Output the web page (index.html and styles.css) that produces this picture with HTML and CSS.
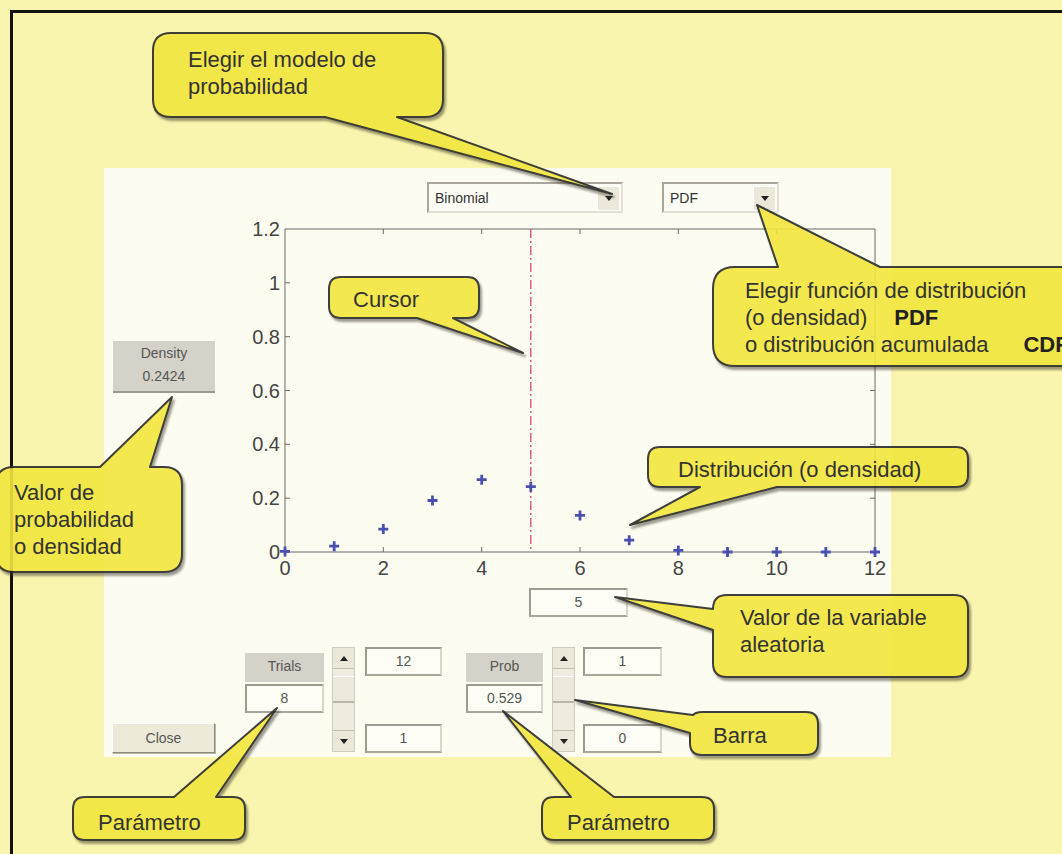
FILE: index.html
```html
<!DOCTYPE html>
<html lang="es">
<head>
    <meta charset="UTF-8">
    <meta name="viewport" content="width=device-width, initial-scale=1.0">
    <title>Distribuciones de probabilidad</title>
    <link rel="stylesheet" href="styles.css">
</head>
<body>
<div class="frame">
    <div class="fig">
        <div class="menus">
            <div class="popup wide">Binomial<span class="drop"></span></div>
            <div class="popup narrow">PDF<span class="drop"></span></div>
        </div>

        <div class="middle">
            <div class="side">
                <div class="readout">Density<br>0.2424</div>
            </div>
            <svg class="plot" width="657" height="365" viewBox="0 0 657 365">
                <rect x="51" y="11" width="590" height="323" fill="none" stroke="#6b6b6b" stroke-width="1"/>
                <path d="M149.3 334v-5M247.7 334v-5M346 334v-5M444.3 334v-5M542.7 334v-5
                         M149.3 11v5M247.7 11v5M346 11v5M444.3 11v5M542.7 11v5
                         M51 280.2h5M51 226.3h5M51 172.5h5M51 118.7h5M51 64.8h5
                         M641 280.2h-5M641 226.3h-5M641 172.5h-5M641 118.7h-5M641 64.8h-5"
                      stroke="#6b6b6b" stroke-width="1" fill="none"/>
                <g class="ticklabels" text-anchor="middle">
                    <text x="51" y="357">0</text>
                    <text x="149.3" y="357">2</text>
                    <text x="247.7" y="357">4</text>
                    <text x="346" y="357">6</text>
                    <text x="444.3" y="357">8</text>
                    <text x="542.7" y="357">10</text>
                    <text x="641" y="357">12</text>
                </g>
                <g class="ticklabels" text-anchor="end">
                    <text x="46" y="341">0</text>
                    <text x="46" y="287">0.2</text>
                    <text x="46" y="233">0.4</text>
                    <text x="46" y="179.5">0.6</text>
                    <text x="46" y="125.5">0.8</text>
                    <text x="46" y="72">1</text>
                    <text x="46" y="18">1.2</text>
                </g>
                <!-- cursor -->
                <path d="M296.8 11V334" stroke="#d9476d" stroke-width="1.3" stroke-dasharray="9 3 2 3"/>
                <!-- pdf values, binomial n=8 p=0.529 -->
                <path d="M46 333.4h10M51 328.4v10
                         M95.2 328.2h10M100.2 323.2v10
                         M144.3 311.1h10M149.3 306.1v10
                         M193.5 282.5h10M198.5 277.5v10
                         M242.7 261.7h10M247.7 256.7v10
                         M291.8 268.7h10M296.8 263.7v10
                         M341 297.4h10M346 292.4v10
                         M390.2 322.2h10M395.2 317.2v10
                         M439.3 332.4h10M444.3 327.4v10
                         M488.5 334h10M493.5 329v10
                         M537.7 334h10M542.7 329v10
                         M586.8 334h10M591.8 329v10
                         M636 334h10M641 329v10"
                      stroke="#4b50b0" stroke-width="2.8" fill="none"/>
            </svg>
        </div>

        <div class="edit xval">5</div>

        <div class="controls">
            <div class="btn">Close</div>

            <div class="param first">
                <div class="lbl">Trials</div>
                <div class="edit">8</div>
            </div>
            <div class="slider">
                <span class="arrow up"></span>
                <span class="track"><span class="thumb"></span></span>
                <span class="arrow down"></span>
            </div>
            <div class="limits">
                <div class="edit">12</div>
                <div class="edit">1</div>
            </div>

            <div class="param second">
                <div class="lbl">Prob</div>
                <div class="edit">0.529</div>
            </div>
            <div class="slider s2">
                <span class="arrow up"></span>
                <span class="track"><span class="thumb"></span></span>
                <span class="arrow down"></span>
            </div>
            <div class="limits l2">
                <div class="edit">1</div>
                <div class="edit">0</div>
            </div>
        </div>
    </div>
</div>

<!-- callouts -->
<svg class="notes" width="1062" height="854" viewBox="0 0 1062 854">
    <defs>
        <filter id="sh" x="-20%" y="-20%" width="140%" height="150%">
            <feDropShadow dx="2" dy="3" stdDeviation="1.2" flood-color="#3a382a" flood-opacity="0.55"/>
        </filter>
    </defs>
    <g class="bubble" filter="url(#sh)">
        <path d="M171,33 H425 Q443,33 443,51 V99 Q443,117 425,117 H397 L612,194 L325,117 H171 Q153,117 153,99 V51 Q153,33 171,33 Z"/>
        <path d="M341,277 H467 Q479,277 479,289 V306 Q479,318 467,318 H453 L523,353 L417,318 H341 Q329,318 329,306 V289 Q329,277 341,277 Z"/>
        <path d="M735,267 H778 L757,205 L880,267 H1070 Q1090,267 1090,287 V346 Q1090,366 1070,366 H735 Q713,366 713,344 V289 Q713,267 735,267 Z"/>
        <path d="M14,467 H100 L172,397 L150,467 H164 Q182,467 182,485 V554 Q182,572 164,572 H14 Q-4,572 -4,554 V485 Q-4,467 14,467 Z"/>
        <path d="M660,447 H956 Q968,447 968,459 V475 Q968,487 956,487 H777 L630,525 L700,487 H660 Q648,487 648,475 V459 Q648,447 660,447 Z"/>
        <path d="M727,595 H954 Q968,595 968,609 V663 Q968,677 954,677 H727 Q713,677 713,663 V630 L615,597 L713,609 Q713,595 727,595 Z"/>
        <path d="M702,712 H806 Q818,712 818,724 V743 Q818,755 806,755 H702 Q690,755 690,743 V733 L575,700 L693,715 Q696,712 702,712 Z"/>
        <path d="M85,797 H174 L277,708 L216,797 H233 Q245,797 245,809 V828 Q245,840 233,840 H85 Q73,840 73,828 V809 Q73,797 85,797 Z"/>
        <path d="M554,797 H571 L503,711 L614,797 H702 Q714,797 714,809 V828 Q714,840 702,840 H554 Q542,840 542,828 V809 Q542,797 554,797 Z"/>
    </g>
</svg>

<div class="note n-model">Elegir el modelo de<br>probabilidad</div>
<div class="note n-cursor">Cursor</div>
<div class="note n-func">Elegir función de distribución<br>(o densidad)<b class="k1">PDF</b><br>o distribución acumulada<b class="k2">CDF</b></div>
<div class="note n-value">Valor de<br>probabilidad<br>o densidad</div>
<div class="note n-dist">Distribución (o densidad)</div>
<div class="note n-var">Valor de la variable<br>aleatoria</div>
<div class="note n-bar">Barra</div>
<div class="note n-p1">Parámetro</div>
<div class="note n-p2">Parámetro</div>
</body>
</html>
```

FILE: styles.css
```css
body {
    margin: 0;
    padding: 10px 0 0 10px;
    width: 1062px;
    height: 854px;
    box-sizing: border-box;
    overflow: hidden;
    position: relative;
    background-color: #faf5ae;
    font-family: "Liberation Sans", Arial, sans-serif;
}

.frame {
    height: 844px;
    border-top: 3px solid #111;
    border-left: 3px solid #111;
    padding: 155px 0 0 91px;
    box-sizing: border-box;
}

.fig {
    width: 787px;
    height: 589px;
    padding-top: 14px;
    box-sizing: border-box;
    background-color: #fdfcf1;
    color: #444;
    font-size: 14px;
}

/* popup menus */
.menus {
    display: flex;
    gap: 39px;
    padding-left: 323px;
}

.popup {
    display: flex;
    align-items: center;
    height: 31px;
    box-sizing: border-box;
    padding: 0 2px 0 6px;
    background-color: #fdfcf4;
    border: 2px solid;
    border-color: #aaa79a #e4e1d4 #e4e1d4 #aaa79a;
    color: #333;
}

.popup.wide { width: 196px; }
.popup.narrow { width: 117px; }

.drop {
    margin-left: auto;
    width: 21px;
    height: 23px;
    display: flex;
    align-items: center;
    justify-content: center;
    background-color: #ebe8da;
    border-left: 1px solid #fff;
    border-top: 1px solid #fff;
}

.drop::after {
    content: "";
    border-left: 4px solid transparent;
    border-right: 4px solid transparent;
    border-top: 5px solid #222;
}

/* plot area */
.middle {
    display: flex;
    height: 365px;
    margin-top: 5px;
}

.side {
    width: 130px;
}

.readout {
    margin: 123px 0 0 9px;
    width: 102px;
    height: 52px;
    box-sizing: border-box;
    padding-top: 1px;
    background-color: #d5d2c9;
    border-bottom: 2px solid #9c998e;
    text-align: center;
    line-height: 23px;
    color: #555;
}

.plot {
    display: block;
}

.ticklabels {
    font-family: "Liberation Sans", Arial, sans-serif;
    font-size: 20px;
    fill: #454545;
}

/* uicontrols */
.edit {
    height: 29px;
    box-sizing: border-box;
    background-color: #fefdf6;
    border: 2px solid;
    border-color: #9d9a8f #d9d6c9 #a9a69a #9d9a8f;
    text-align: center;
    line-height: 25px;
    color: #555;
}

.edit.xval {
    width: 99px;
    margin: 5px 0 0 425px;
}

.lbl {
    height: 29px;
    background-color: #d5d2c9;
    text-align: center;
    line-height: 27px;
    color: #555;
}

.controls {
    display: flex;
    align-items: flex-start;
    height: 106px;
    margin-top: 30px;
}

.btn {
    width: 103px;
    height: 30px;
    margin: 76px 0 0 8px;
    box-sizing: border-box;
    background-color: #ece9d9;
    border: 1px solid;
    border-color: #fff #8d8a80 #8d8a80 #fff;
    box-shadow: 1px 1px 0 #b8b5a9;
    text-align: center;
    line-height: 28px;
    color: #555;
}

.param {
    width: 79px;
    margin-top: 6px;
    display: flex;
    flex-direction: column;
    gap: 2px;
}

.param.first { margin-left: 30px; }
.param.second { margin-left: 24px; width: 77px; }

.slider {
    width: 23px;
    height: 105px;
    margin-left: 8px;
    display: flex;
    flex-direction: column;
    box-sizing: border-box;
    background-color: #efecdf;
    border: 1px solid #cfccbe;
}

.slider.s2 { margin-left: 9px; }

.arrow {
    height: 20px;
    display: flex;
    align-items: center;
    justify-content: center;
    background-color: #ebe8da;
    border-bottom: 1px solid #c2bfb1;
}

.arrow.down {
    border-bottom: 0;
    border-top: 1px solid #c2bfb1;
}

.arrow.up::after {
    content: "";
    border-left: 4px solid transparent;
    border-right: 4px solid transparent;
    border-bottom: 5px solid #222;
}

.arrow.down::after {
    content: "";
    border-left: 4px solid transparent;
    border-right: 4px solid transparent;
    border-top: 5px solid #222;
}

.track {
    flex: 1;
    display: block;
}

.thumb {
    display: block;
    height: 24px;
    margin-top: 7px;
    background-color: #ece9dc;
    border-top: 1px solid #fff;
    border-bottom: 2px solid #b9b6a8;
}

.limits {
    width: 77px;
    height: 106px;
    margin-left: 10px;
    display: flex;
    flex-direction: column;
    justify-content: space-between;
}

.limits.l2 { margin-left: 8px; width: 79px; }

/* callouts */
.notes {
    position: absolute;
    left: 0;
    top: 0;
}

.bubble {
    opacity: 0.9;
}

.bubble path {
    fill: #f2e63c;
    stroke: #2a2a2a;
    stroke-width: 2;
    stroke-linejoin: round;
}

.note {
    position: absolute;
    font-size: 22px;
    line-height: 27px;
    color: #333;
    white-space: nowrap;
}

.note b {
    color: #222;
}

.k1 { margin-left: 27px; }
.k2 { margin-left: 35px; }

.n-model { left: 188px; top: 46px; }
.n-cursor { left: 353px; top: 286px; }
.n-func { left: 745px; top: 277px; }
.n-value { left: 14px; top: 479px; }
.n-dist { left: 678px; top: 456px; }
.n-var { left: 740px; top: 604px; }
.n-bar { left: 713px; top: 722px; }
.n-p1 { left: 98px; top: 809px; }
.n-p2 { left: 567px; top: 809px; }
```
